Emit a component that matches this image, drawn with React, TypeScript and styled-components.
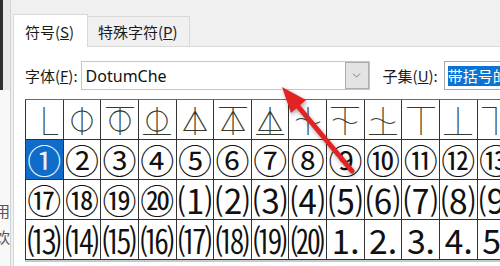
import React from 'react';
import styled, { createGlobalStyle } from 'styled-components';
import { ChevronDown } from 'lucide-react';

const GlobalStyle = createGlobalStyle`
  html, body {
    margin: 0;
    padding: 0;
  }
  body {
    width: 500px;
    height: 266px;
    overflow: hidden;
    background: #f0f0f0;
    font-family: "Noto Sans CJK SC", "Noto Sans", sans-serif;
  }
`;

const Screen = styled.div`
  position: relative;
  display: flex;
  width: 500px;
  height: 266px;
  overflow: hidden;
`;

// window behind the dialog, only a sliver visible
const BackWindow = styled.div`
  width: 10px;
  flex-shrink: 0;
  display: flex;
  flex-direction: column;
  background: #f8f8f8;
  border-right: 1px solid #d2d2d2;
`;

const BackTitle = styled.div`
  height: 90px;
  border-left: 3px solid #2d2d2d;
  background: #e8e8e8;
`;

const BackText = styled.div`
  display: flex;
  flex-direction: column;
  align-items: flex-end;
  margin-top: 112px;
  gap: 8px;
  overflow: hidden;
  font-size: 15px;
  line-height: 18px;
  color: #555;
`;

const Dialog = styled.div`
  flex: 1;
  min-width: 0;
  display: flex;
  flex-direction: column;
  padding: 14px 0 0 2px;
  background: #f0f0f0;
`;

const TabStrip = styled.div`
  display: flex;
  align-items: flex-end;
  height: 32px;
  position: relative;
  z-index: 1;
`;

const Tab = styled.div<{ $active?: boolean }>`
  box-sizing: border-box;
  height: ${(p) => (p.$active ? 33 : 30)}px;
  width: ${(p) => (p.$active ? 75 : 102)}px;
  margin-bottom: ${(p) => (p.$active ? -1 : 0)}px;
  padding-left: ${(p) => (p.$active ? 11 : 10)}px;
  display: flex;
  align-items: center;
  border: 1px solid #d9d9d9;
  border-bottom: none;
  border-left-width: ${(p) => (p.$active ? 1 : 0)}px;
  background: ${(p) => (p.$active ? '#ffffff' : '#f0f0f0')};
  font-size: 15px;
  color: #1a1a1a;
  white-space: nowrap;
`;

const Panel = styled.div`
  flex: 1;
  min-width: 0;
  display: flex;
  flex-direction: column;
  background: #ffffff;
  border-top: 1px solid #d9d9d9;
  border-left: 1px solid #d9d9d9;
  padding: 14px 0 0 11px;
`;

const FontRow = styled.div`
  display: flex;
  align-items: center;
  height: 29px;
  white-space: nowrap;

  & > * {
    flex-shrink: 0;
  }
`;

const Label = styled.span<{ $gap?: number }>`
  font-size: 15px;
  color: #1a1a1a;
  margin-left: ${(p) => p.$gap ?? 0}px;
`;

const ComboBox = styled.div`
  box-sizing: border-box;
  width: 289px;
  height: 29px;
  margin-left: 3px;
  display: flex;
  border: 1px solid #c6c6c6;
  background: #fff;
`;

const ComboText = styled.div`
  flex: 1;
  padding-left: 4px;
  display: flex;
  align-items: center;
  font-family: "Noto Sans", "Liberation Sans", sans-serif;
  font-size: 16px;
  color: #111;
`;

const DropButton = styled.div`
  width: 22px;
  display: flex;
  align-items: center;
  justify-content: center;
  background: #e3e3e3;
  border: 1px solid #adadad;
  color: #606060;
`;

const SubsetBox = styled.div`
  box-sizing: border-box;
  width: 140px;
  height: 29px;
  margin-left: 6px;
  padding: 0 3px;
  display: flex;
  align-items: center;
  border: 1px solid #a8a8a8;
  background: #fff;
`;

const Highlight = styled.span`
  background: #0a74d4;
  color: #fff;
  font-size: 15px;
  line-height: 20px;
  padding-right: 2px;
`;

const CharGrid = styled.div`
  display: grid;
  grid-template-columns: repeat(16, 37.65px);
  grid-auto-rows: 40px;
  width: max-content;
  margin-top: 9px;
  border-top: 1px solid #6a6a6a;
  border-left: 1px solid #333;
  box-shadow: 0 2px 0 #c9c9c9;
`;

const Cell = styled.div<{ $selected?: boolean; $symbol?: boolean }>`
  box-sizing: border-box;
  display: flex;
  align-items: center;
  justify-content: center;
  overflow: hidden;
  padding-top: ${(p) => (p.$symbol ? 6 : 0)}px;
  border-right: 1px solid #333;
  border-bottom: 1px solid #333;
  background: ${(p) => (p.$selected ? '#0f6cc8' : '#fff')};
  color: ${(p) => (p.$selected ? '#e8f3ff' : p.$symbol ? '#343b2c' : '#111')};
  font-family: ${(p) =>
    p.$symbol
      ? '"DejaVu Sans", "DejaVu Sans Mono", sans-serif'
      : '"Noto Sans CJK KR", "DejaVu Sans", sans-serif'};
  font-size: ${(p) => (p.$symbol ? 28 : 34)}px;
  line-height: 1;
  white-space: nowrap;
`;

const ArrowLayer = styled.svg`
  position: absolute;
  left: 0;
  top: 0;
  pointer-events: none;
  filter: drop-shadow(1px 2px 2px rgba(0, 0, 0, 0.35));
`;

const range = (from: number, count: number) =>
  Array.from({ length: count }, (_, i) => String.fromCodePoint(from + i));

const rows: string[][] = [
  ['\u23BF', ...range(0x23c0, 15)],
  range(0x2460, 16),
  [...range(0x2470, 4), ...range(0x2474, 12)],
  [...range(0x2480, 8), ...range(0x2488, 8)],
];

export default function App() {
  return (
    <>
      <GlobalStyle />
      <Screen>
        <BackWindow>
          <BackTitle />
          <BackText>
            <span>用</span>
            <span>饮</span>
          </BackText>
        </BackWindow>
        <Dialog>
          <TabStrip>
            <Tab $active>
              符号(<u>S</u>)
            </Tab>
            <Tab>
              特殊字符(<u>P</u>)
            </Tab>
          </TabStrip>
          <Panel>
            <FontRow>
              <Label>
                字体(<u>F</u>):
              </Label>
              <ComboBox>
                <ComboText>DotumChe</ComboText>
                <DropButton>
                  <ChevronDown size={13} strokeWidth={1.4} />
                </DropButton>
              </ComboBox>
              <Label $gap={13}>
                子集(<u>U</u>):
              </Label>
              <SubsetBox>
                <Highlight>带括号的字母数字</Highlight>
              </SubsetBox>
            </FontRow>
            <CharGrid>
              {rows.map((row, r) =>
                row.map((ch, c) => (
                  <Cell key={`${r}-${c}`} $symbol={r === 0} $selected={r === 1 && c === 0}>
                    {ch}
                  </Cell>
                ))
              )}
            </CharGrid>
          </Panel>
        </Dialog>
        <ArrowLayer width={500} height={266} viewBox="0 0 500 266">
          <line x1={352} y1={171} x2={296} y2={104} stroke="#e32323" strokeWidth={5} strokeLinecap="round" />
          <polygon points="282,87 306,100 291,113" fill="#e32323" />
        </ArrowLayer>
      </Screen>
    </>
  );
}
